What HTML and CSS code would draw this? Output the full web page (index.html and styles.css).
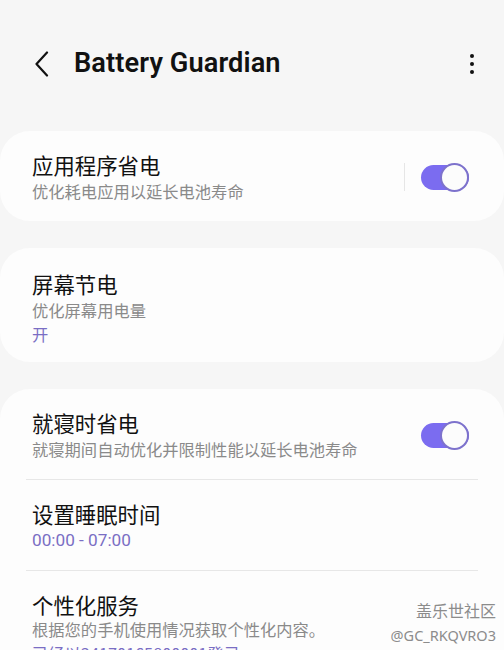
FILE: index.html
```html
<!DOCTYPE html>
<html lang="zh-CN">

<head>
  <meta charset="UTF-8">
  <meta name="viewport" content="width=device-width, initial-scale=1.0">
  <title>Battery Guardian</title>
  <link rel="stylesheet" href="styles.css">
</head>

<body>
  <header class="topbar">
    <svg class="back" width="16" height="26" viewBox="0 0 16 26">
      <path d="M13 1.5 L2.5 13 L13 24.5" fill="none" stroke="#111" stroke-width="2.2" stroke-linecap="round" stroke-linejoin="round" />
    </svg>
    <h1 class="title">Battery Guardian</h1>
    <span class="more"><i></i><i></i><i></i></span>
  </header>

  <main class="list">
    <section class="card">
      <div class="row">
        <div class="text">
          <div class="name">应用程序省电</div>
          <div class="desc">优化耗电应用以延长电池寿命</div>
        </div>
        <span class="sep"></span>
        <span class="toggle"></span>
      </div>
    </section>

    <section class="card">
      <div class="row">
        <div class="text">
          <div class="name">屏幕节电</div>
          <div class="desc">优化屏幕用电量</div>
          <div class="value">开</div>
        </div>
      </div>
    </section>

    <section class="card">
      <div class="row">
        <div class="text">
          <div class="name">就寝时省电</div>
          <div class="desc">就寝期间自动优化并限制性能以延长电池寿命</div>
        </div>
        <span class="toggle"></span>
      </div>
      <hr class="divider">
      <div class="row">
        <div class="text">
          <div class="name">设置睡眠时间</div>
          <div class="value time">00:00 - 07:00</div>
        </div>
      </div>
      <hr class="divider">
      <div class="row">
        <div class="text">
          <div class="name">个性化服务</div>
          <div class="desc">根据您的手机使用情况获取个性化内容。</div>
          <div class="value">已经以34170165800001登录</div>
        </div>
      </div>
    </section>
  </main>

  <div class="watermark">
    <div>盖乐世社区</div>
    <div class="handle">@GC_RKQVRO3</div>
  </div>
</body>

</html>
```

FILE: styles.css
```css
*,
*::after,
*::before {
  box-sizing: border-box;
}

body {
  margin: 0;
  height: 650px;
  overflow: hidden;
  background-color: #f6f6f6;
  font-family: "Noto Sans CJK SC", "Noto Sans", sans-serif;
  color: #111;
}

/* cabecera */
.topbar {
  height: 128px;
  display: flex;
  align-items: center;
  padding: 0 32px 0 34px;
}

.back {
  display: block;
  margin-right: 24px;
}

.title {
  flex: 1;
  margin: 0;
  margin-top: -2px;
  font-family: Roboto, "Noto Sans", sans-serif;
  font-weight: 600;
  font-size: 27.2px;
  letter-spacing: 0.1px;
  color: #111;
}

.more {
  display: flex;
  flex-direction: column;
  gap: 4px;
  margin-right: -2px;
}

.more i {
  width: 4px;
  height: 4px;
  border-radius: 50%;
  background-color: #111;
}

/* tarjetas */
.list {
  display: flex;
  flex-direction: column;
  gap: 27px;
  padding-top: 3px;
}

.card {
  background-color: #fdfdfd;
  border-radius: 30px;
}

.row {
  display: flex;
  align-items: center;
  padding: 20px 35px 18px 32px;
}

.card:nth-child(2) .row {
  padding-top: 22px;
  padding-bottom: 16px;
}

.card:nth-child(3) .row {
  padding-top: 20px;
  padding-bottom: 18px;
}

.text {
  flex: 1;
}

.name {
  font-size: 21.4px;
  line-height: 28px;
  color: #111;
}

.desc {
  font-size: 16.3px;
  line-height: 24px;
  color: #8a8a8a;
}

.card:nth-child(3) .row:last-child .desc {
  margin-top: -2px;
}

.value {
  font-size: 16.3px;
  line-height: 24px;
  color: #7a6ec4;
}

.time {
  font-family: Roboto, "Noto Sans", sans-serif;
  font-size: 17.2px;
}

.sep {
  width: 1px;
  height: 28px;
  background-color: #e6e6e6;
  margin-right: 16px;
}

.toggle {
  position: relative;
  width: 48px;
  height: 25px;
  border-radius: 13px;
  background-color: #7b6cf0;
}

.toggle::after {
  content: "";
  position: absolute;
  right: 0;
  top: -2px;
  width: 29px;
  height: 29px;
  border-radius: 50%;
  background-color: #fcfcfc;
  border: 2px solid #7d72cc;
}

.divider {
  margin: 0 26px;
  border: 0;
  height: 1px;
  background-color: #e7e7e7;
}

/* marca de agua */
.watermark {
  position: absolute;
  right: 8px;
  top: 598px;
  text-align: right;
  color: #8c8c8c;
  font-size: 16px;
  line-height: 24px;
}

.watermark .handle {
  font-family: "Noto Sans", sans-serif;
  font-size: 14.5px;
  line-height: 22px;
  margin-top: 2px;
}
```
